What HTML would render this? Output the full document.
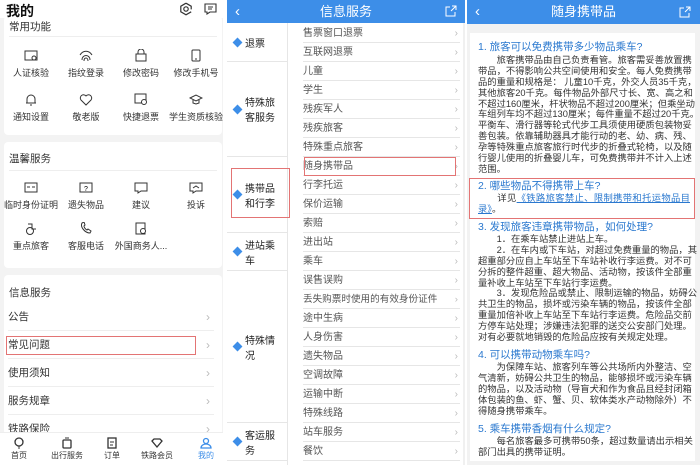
<!DOCTYPE html>
<html><head><meta charset="utf-8"><style>
*{margin:0;padding:0;box-sizing:border-box}
body{width:700px;height:465px;overflow:hidden;background:#fff;font-family:"Liberation Sans","Noto Sans CJK SC",sans-serif;position:relative;color:#333}
.abs{position:absolute}
#L{left:0;top:0;width:223px;height:465px;background:#f3f3f3;overflow:hidden}
.card{position:absolute;left:4px;width:218px;background:#fff;border-radius:4px}
.ic{position:absolute;width:56px;text-align:center;font-size:9px;color:#333}
.ic svg{display:block;margin:0 auto 4px}
.row{position:absolute;left:8px;width:206px;font-size:10.5px;color:#333;border-bottom:1px solid #eee;height:28px;line-height:28px}
.row:after{content:"›";position:absolute;right:4px;color:#bbb;font-size:12px}
.tab{position:absolute;top:437px;width:44px;text-align:center;font-size:8px;color:#333}
#M{left:227px;top:0;width:238px;height:465px;background:#fff}
.mh{position:absolute;left:0;top:0;width:238px;height:23px;background:#3d8ee8;color:#fff;text-align:center;font-size:13px;line-height:23px}
.mi{position:absolute;left:76px;width:157px;height:19px;line-height:19px;font-size:10px;color:#555;border-bottom:1px solid #e6e6e6}
.mi:after{content:"›";position:absolute;right:2px;color:#bbb}
.grp{position:absolute;left:0;width:60px;border-bottom:1px solid #e6e6e6;font-size:10px;color:#222;display:flex;align-items:center}
.grp i{display:inline-block;width:7px;height:7px;background:#3d8ee8;transform:rotate(45deg);margin:0 4px 0 7px;flex:none}
#R{left:467px;top:0;width:233px;height:465px;background:#f2f2f2}
.rh{position:absolute;left:0;top:0;width:233px;height:24px;background:#3d8ee8;color:#fff;text-align:center;font-size:13px;line-height:24px}
.h{position:absolute;left:11px;font-size:10.5px;color:#2a78cf;line-height:13px;white-space:nowrap}
.p{position:absolute;left:11px;width:212px;font-size:9.3px;line-height:10.9px;color:#333}
.p div{white-space:nowrap;text-align:justify;text-align-last:justify;height:10.9px}
.p div.l{text-align-last:left}
.red{position:absolute;border:1.3px solid #e37474}
a{color:#2a78cf;text-decoration:underline}
</style></head><body>

<div id="L" class="abs">
<div class="card" style="top:16px;height:119px">
<div class="abs" style="left:5px;top:3px;font-size:10.5px;color:#333">常用功能</div>
<div class="abs" style="left:5px;top:20px;width:208px;border-top:1px solid #eee"></div>
</div>
<div class="abs" style="left:0;top:0;width:223px;height:18px;background:#fff"></div>
<div class="abs" style="left:6px;top:1px;font-size:14px;font-weight:bold;color:#111">我的</div>
<svg class="abs" style="left:179px;top:2px" width="14" height="14" viewBox="0 0 14 14"><circle cx="7" cy="7" r="2.2" fill="none" stroke="#333" stroke-width="1.2"/><path d="M7 1.2l2.6 1.5 2.6 1.5v3.2M7 1.2L4.4 2.7 1.8 4.2v5.6L7 12.8l5.2-3" fill="none" stroke="#333" stroke-width="1.2"/></svg>
<svg class="abs" style="left:204px;top:3px" width="13" height="12" viewBox="0 0 13 12"><path d="M1 1h11v8H6l-3 2V9H1z" fill="none" stroke="#333" stroke-width="1.1"/><path d="M4 4h5M4 6h4" stroke="#333"/></svg>

<div class="card" style="top:142px;height:126px">
<div class="abs" style="left:5px;top:9px;font-size:10.5px;color:#333">温馨服务</div>
<div class="abs" style="left:5px;top:28px;width:208px;border-top:1px solid #eee"></div>
</div>
<div class="card" style="top:275px;height:160px">
<div class="abs" style="left:5px;top:10px;font-size:10.5px;color:#333">信息服务</div>
</div>

<div class="ic" style="left:3px;top:50px"><svg width="14" height="12"><rect x="1" y="1" width="12" height="9" fill="none" stroke="#333"/><circle cx="10" cy="8" r="2" fill="#fff" stroke="#333"/></svg>人证核验</div>
<div class="ic" style="left:58px;top:49px"><svg width="14" height="13"><path d="M3 11c0-6 8-6 8 0M5 12c0-4 4-4 4 0M1 6c3-5 9-5 12 0" fill="none" stroke="#333"/></svg>指纹登录</div>
<div class="ic" style="left:113px;top:49px"><svg width="14" height="13"><rect x="2" y="5" width="10" height="7" fill="none" stroke="#333"/><path d="M4 5V3a3 3 0 016 0v2" fill="none" stroke="#333"/></svg>修改密码</div>
<div class="ic" style="left:168px;top:49px"><svg width="12" height="13"><rect x="2" y="1" width="8" height="11" rx="1" fill="none" stroke="#333"/><path d="M5 10h2" stroke="#333"/></svg>修改手机号</div>
<div class="ic" style="left:3px;top:93px"><svg width="12" height="13"><path d="M2 10V6a4 4 0 018 0v4zM1 10h10M5 12h2" fill="none" stroke="#333"/></svg>通知设置</div>
<div class="ic" style="left:58px;top:93px"><svg width="14" height="13"><path d="M7 12L2 7a3 3 0 015-4 3 3 0 015 4z" fill="none" stroke="#333"/></svg>敬老版</div>
<div class="ic" style="left:113px;top:93px"><svg width="14" height="13"><rect x="1" y="1" width="11" height="9" fill="none" stroke="#333"/><circle cx="10" cy="9" r="2.5" fill="#fff" stroke="#333"/></svg>快捷退票</div>
<div class="ic" style="top:93px;width:60px;left:166px"><svg width="14" height="13"><path d="M1 5l6-3 6 3-6 3zM4 7v3l3 1 3-1V7" fill="none" stroke="#333"/></svg>学生资质核验</div>
<div class="ic" style="top:182px;width:58px;left:2px"><svg width="14" height="12"><rect x="1" y="1" width="12" height="9" fill="none" stroke="#333"/><path d="M3 5h3M8 5h3" stroke="#333"/></svg>临时身份证明</div>
<div class="ic" style="left:58px;top:182px"><svg width="14" height="12"><rect x="1" y="1" width="12" height="9" fill="none" stroke="#333"/><text x="5" y="9" font-size="7">?</text></svg>遗失物品</div>
<div class="ic" style="left:113px;top:182px"><svg width="14" height="12"><path d="M1 1h12v8H7l-3 2V9H1z" fill="none" stroke="#333"/></svg>建议</div>
<div class="ic" style="left:168px;top:182px"><svg width="14" height="12"><path d="M1 1h12v8H7l-3 2V9H1z" fill="none" stroke="#333"/><path d="M4 6l3-2 3 2" fill="none" stroke="#333"/></svg>投诉</div>
<div class="ic" style="left:3px;top:222px"><svg width="14" height="13"><circle cx="6" cy="9" r="3.5" fill="none" stroke="#333"/><path d="M4 2h4v5h4" fill="none" stroke="#333"/></svg>重点旅客</div>
<div class="ic" style="left:58px;top:222px"><svg width="14" height="13"><path d="M3 1c-2 4 3 10 8 10l1-2-3-2-1 1c-2-1-3-3-3-4l1-1-1-3z" fill="none" stroke="#333"/></svg>客服电话</div>
<div class="ic" style="left:110px;top:222px;width:62px"><svg width="14" height="13"><rect x="2" y="1" width="9" height="11" fill="none" stroke="#333"/><circle cx="9" cy="9" r="2.5" fill="#fff" stroke="#333"/></svg>外国商务人...</div>

<div class="row" style="top:303px">公告</div>
<div class="row" style="top:331px">常见问题</div>
<div class="row" style="top:359px">使用须知</div>
<div class="row" style="top:387px">服务规章</div>
<div class="row" style="top:415px;border:none">铁路保险</div>
<div class="red" style="left:6px;top:336px;width:190px;height:19px"></div>

<div class="abs" style="left:0;top:432px;width:223px;height:33px;background:#fff;border-top:1px solid #eee"></div>
<div class="tab" style="left:-3px"><svg width="12" height="12" style="display:block;margin:0 auto 1px"><circle cx="6" cy="5" r="4" fill="none" stroke="#333" stroke-width="1.3"/><path d="M6 9v3" stroke="#333"/></svg>首页</div>
<div class="tab" style="left:45px"><svg width="12" height="12" style="display:block;margin:0 auto 1px"><rect x="2" y="3" width="8" height="8" rx="1" fill="none" stroke="#333" stroke-width="1.3"/><path d="M4 1h4" stroke="#333"/></svg>出行服务</div>
<div class="tab" style="left:90px"><svg width="12" height="12" style="display:block;margin:0 auto 1px"><rect x="2" y="1" width="8" height="10" fill="none" stroke="#333" stroke-width="1.3"/><path d="M4 5h4M4 8h3" stroke="#333"/></svg>订单</div>
<div class="tab" style="left:135px"><svg width="12" height="12" style="display:block;margin:0 auto 1px"><path d="M1 4l2-2h6l2 2-5 6z" fill="none" stroke="#333" stroke-width="1.3"/></svg>铁路会员</div>
<div class="tab" style="left:184px;color:#3d8ee8"><svg width="12" height="12" style="display:block;margin:0 auto 1px"><circle cx="6" cy="4" r="2.5" fill="none" stroke="#3d8ee8" stroke-width="1.3"/><path d="M1 11a5 4 0 0110 0z" fill="none" stroke="#3d8ee8" stroke-width="1.3"/></svg>我的</div>
</div>

<div id="M" class="abs">
<div class="mh"><span class="abs" style="left:8px;font-size:15px">‹</span>信息服务<svg class="abs" style="right:8px;top:5px" width="12" height="12"><path d="M10 7v4H1V2h4M6 6l5-5M7 1h4v4" fill="none" stroke="#fff"/></svg></div>
<div class="abs" style="left:60px;top:23px;height:442px;border-left:1px solid #e6e6e6"></div>
<div class="abs" style="left:236px;top:23px;width:2px;height:442px;background:#f0f0f0"></div>
<div class="grp" style="top:23px;height:39px"><i></i>退票</div>
<div class="grp" style="top:62px;height:95px"><i></i>特殊旅<br>客服务</div>
<div class="grp" style="top:157px;height:76px"><i></i>携带品<br>和行李</div>
<div class="grp" style="top:233px;height:38px"><i></i>进站乘<br>车</div>
<div class="grp" style="top:271px;height:152px"><i></i>特殊情<br>况</div>
<div class="grp" style="top:423px;height:38px"><i></i>客运服<br>务</div>
<div class="mi" style="top:24px">售票窗口退票</div>
<div class="mi" style="top:43px">互联网退票</div>
<div class="mi" style="top:62px">儿童</div>
<div class="mi" style="top:81px">学生</div>
<div class="mi" style="top:100px">残疾军人</div>
<div class="mi" style="top:119px">残疾旅客</div>
<div class="mi" style="top:138px">特殊重点旅客</div>
<div class="mi" style="top:157px">随身携带品</div>
<div class="mi" style="top:176px">行李托运</div>
<div class="mi" style="top:195px">保价运输</div>
<div class="mi" style="top:214px">索赔</div>
<div class="mi" style="top:233px">进出站</div>
<div class="mi" style="top:252px">乘车</div>
<div class="mi" style="top:271px">误售误购</div>
<div class="mi" style="top:290px;font-size:9.6px;white-space:nowrap">丢失购票时使用的有效身份证件</div>
<div class="mi" style="top:309px">途中生病</div>
<div class="mi" style="top:328px">人身伤害</div>
<div class="mi" style="top:347px">遗失物品</div>
<div class="mi" style="top:366px">空调故障</div>
<div class="mi" style="top:385px">运输中断</div>
<div class="mi" style="top:404px">特殊线路</div>
<div class="mi" style="top:423px">站车服务</div>
<div class="mi" style="top:442px">餐饮</div>
<div class="red" style="left:4px;top:168px;width:59px;height:50px"></div>
<div class="red" style="left:77px;top:157px;width:152px;height:19px"></div>
</div>

<div id="R" class="abs">
<div class="rh"><span class="abs" style="left:8px;font-size:15px">‹</span>随身携带品<svg class="abs" style="right:9px;top:6px" width="12" height="12"><path d="M10 7v4H1V2h4M6 6l5-5M7 1h4v4" fill="none" stroke="#fff"/></svg></div>
<div class="abs" style="left:3px;top:33px;width:225px;height:428px;background:#fff"></div>
<div class="h" style="top:41px">1. 旅客可以免费携带多少物品乘车?</div>
<div class="p" style="top:55px">
<div>　　旅客携带品由自己负责看管。旅客需妥善放置携</div>
<div>带品，不得影响公共空间使用和安全。每人免费携带</div>
<div>品的重量和规格是： 儿童10千克，外交人员35千克，</div>
<div>其他旅客20千克。每件物品外部尺寸长、宽、高之和</div>
<div>不超过160厘米，杆状物品不超过200厘米；但乘坐动</div>
<div>车组列车均不超过130厘米；每件重量不超过20千克。</div>
<div>平衡车、滑行器等轮式代步工具须使用硬质包装物妥</div>
<div>善包装。依靠辅助器具才能行动的老、幼、病、残、</div>
<div>孕等特殊重点旅客旅行时代步的折叠式轮椅，以及随</div>
<div>行婴儿使用的折叠婴儿车，可免费携带并不计入上述</div>
<div class="l">范围。</div>
</div>
<div class="h" style="top:180px">2. 哪些物品不得携带上车?</div>
<div class="p" style="top:193px">
<div>　　详见<a>《铁路旅客禁止、限制携带和托运物品目</a></div>
<div class="l"><a>录》</a>。</div>
</div>
<div class="red" style="left:2px;top:178px;width:226px;height:41px"></div>
<div class="h" style="top:221px">3. 发现旅客违章携带物品，如何处理?</div>
<div class="p" style="top:234px">
<div class="l">　　1．在乘车站禁止进站上车。</div>
<div>　　2．在车内或下车站，对超过免费重量的物品，其</div>
<div>超重部分应自上车站至下车站补收行李运费。对不可</div>
<div>分拆的整件超重、超大物品、活动物，按该件全部重</div>
<div class="l">量补收上车站至下车站行李运费。</div>
<div>　　3．发现危险品或禁止、限制运输的物品，妨碍公</div>
<div>共卫生的物品，损坏或污染车辆的物品，按该件全部</div>
<div>重量加倍补收上车站至下车站行李运费。危险品交前</div>
<div>方停车站处理；涉嫌违法犯罪的送交公安部门处理。</div>
<div class="l">对有必要就地销毁的危险品应按有关规定处理。</div>
</div>
<div class="h" style="top:349px">4. 可以携带动物乘车吗?</div>
<div class="p" style="top:362px">
<div>　　为保障车站、旅客列车等公共场所内外整洁、空</div>
<div>气清新，妨碍公共卫生的物品，能够损坏或污染车辆</div>
<div>的物品，以及活动物（导盲犬和作为食品且经封闭箱</div>
<div>体包装的鱼、虾、蟹、贝、软体类水产动物除外）不</div>
<div class="l">得随身携带乘车。</div>
</div>
<div class="h" style="top:423px">5. 乘车携带香烟有什么规定?</div>
<div class="p" style="top:436px">
<div>　　每名旅客最多可携带50条，超过数量请出示相关</div>
<div class="l">部门出具的携带证明。</div>
</div>
</div>
</body></html>
